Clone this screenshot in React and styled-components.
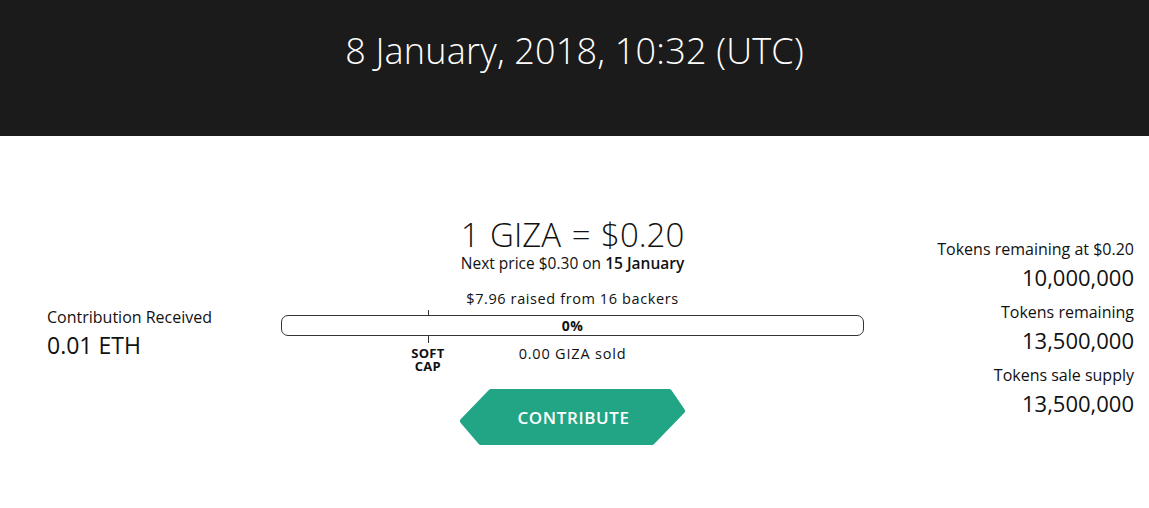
import React from 'react'
import styled, { createGlobalStyle } from 'styled-components'

const Global = createGlobalStyle`
  html, body {
    margin: 0;
    padding: 0;
    background: #fff;
    font-family: 'Open Sans', 'Noto Sans', sans-serif;
    color: #111;
  }
`

const Header = styled.header`
  height: 136px;
  background: #1b1b1b;
  color: #fff;
  display: flex;
  justify-content: center;
  padding-top: 26px;
  box-sizing: border-box;
`

const Clock = styled.h1`
  margin: 0;
  font-size: 36px;
  font-weight: 300;
  line-height: 50px;
  letter-spacing: 0.2px;
`

const Sale = styled.main`
  display: grid;
  grid-template-columns: 234px 583px 1fr;
  align-items: center;
  padding: 80px 15px 0 47px;
`

const Stat = styled.div`
  display: flex;
  flex-direction: column;
  align-items: ${p => (p.right ? 'flex-end' : 'flex-start')};
  text-align: ${p => (p.right ? 'right' : 'left')};
  margin-top: ${p => (p.right ? -4 : 6)}px;
`

const StatLabel = styled.div`
  font-size: 16px;
  line-height: 22px;
`

const StatValue = styled.div`
  font-size: ${p => (p.big ? 23 : 22)}px;
  line-height: 32px;
  margin-top: 1px;
  margin-bottom: ${p => (p.gap ? 8 : 0)}px;
`

const Center = styled.div`
  display: flex;
  flex-direction: column;
  align-items: center;
`

const Price = styled.div`
  font-size: 33px;
  line-height: 36px;
  font-weight: 300;
  word-spacing: 2px;
  margin-top: 1px;
`

const NextPrice = styled.div`
  font-size: 15.5px;
  line-height: 20px;

  b {
    font-weight: 600;
  }
`

const Raised = styled.div`
  margin-top: 16px;
  font-size: 14.5px;
  line-height: 20px;
  letter-spacing: 0.6px;
`

const Track = styled.div`
  position: relative;
  width: 100%;
  margin-top: 6px;
`

const Bar = styled.div`
  height: 19px;
  border: 1px solid #333;
  border-radius: 7px;
  display: flex;
  align-items: center;
  justify-content: center;
  font-size: 14px;
  font-weight: 700;
  letter-spacing: 0.5px;
`

const Tick = styled.div`
  position: absolute;
  top: ${p => (p.below ? '21px' : '-5px')};
  left: ${p => p.at}%;
  width: 1px;
  height: ${p => (p.below ? 7 : 5)}px;
  background: #333;
`

const CapLabel = styled.div`
  position: absolute;
  top: 32px;
  left: ${p => p.at}%;
  transform: translateX(-50%);
  font-size: 13px;
  font-weight: 700;
  line-height: 13px;
  text-align: center;
  letter-spacing: 0.3px;
`

const Sold = styled.div`
  margin-top: 8px;
  font-size: 14.5px;
  line-height: 20px;
  letter-spacing: 0.8px;
`

const Contribute = styled.button`
  position: relative;
  margin-top: 25px;
  width: 226px;
  height: 56px;
  border: none;
  background: transparent;
  cursor: pointer;
  color: #fff;
  font-family: inherit;
  font-size: 17px;
  font-weight: 600;
  letter-spacing: 0.6px;
  padding: 0;
  display: flex;
  align-items: center;
  justify-content: center;

  svg {
    position: absolute;
    inset: 0;
    z-index: 0;
  }

  span {
    position: relative;
    z-index: 1;
    margin-left: 2px;
  }
`

const Shape = () => (
  <svg width="226" height="56" viewBox="0 0 226 56">
    <polygon
      points="31,3 209,3 222,22 192,53 21,53 3,32"
      fill="#22a585"
      stroke="#22a585"
      strokeWidth="6"
      strokeLinejoin="round"
    />
  </svg>
)

const softCap = 25.2

export default function App() {
  return (
    <>
      <Global />
      <Header>
        <Clock>8 January, 2018, 10:32 (UTC)</Clock>
      </Header>
      <Sale>
        <Stat>
          <StatLabel>Contribution Received</StatLabel>
          <StatValue big>0.01 ETH</StatValue>
        </Stat>
        <Center>
          <Price>1 GIZA = $0.20</Price>
          <NextPrice>
            Next price $0.30 on <b>15 January</b>
          </NextPrice>
          <Raised>$7.96 raised from 16 backers</Raised>
          <Track>
            <Tick at={softCap} />
            <Bar>0%</Bar>
            <Tick at={softCap} below />
            <CapLabel at={softCap}>
              SOFT
              <br />
              CAP
            </CapLabel>
          </Track>
          <Sold>0.00 GIZA sold</Sold>
          <Contribute>
            <Shape />
            <span>CONTRIBUTE</span>
          </Contribute>
        </Center>
        <Stat right>
          <StatLabel>Tokens remaining at $0.20</StatLabel>
          <StatValue gap>10,000,000</StatValue>
          <StatLabel>Tokens remaining</StatLabel>
          <StatValue gap>13,500,000</StatValue>
          <StatLabel>Tokens sale supply</StatLabel>
          <StatValue>13,500,000</StatValue>
        </Stat>
      </Sale>
    </>
  )
}
